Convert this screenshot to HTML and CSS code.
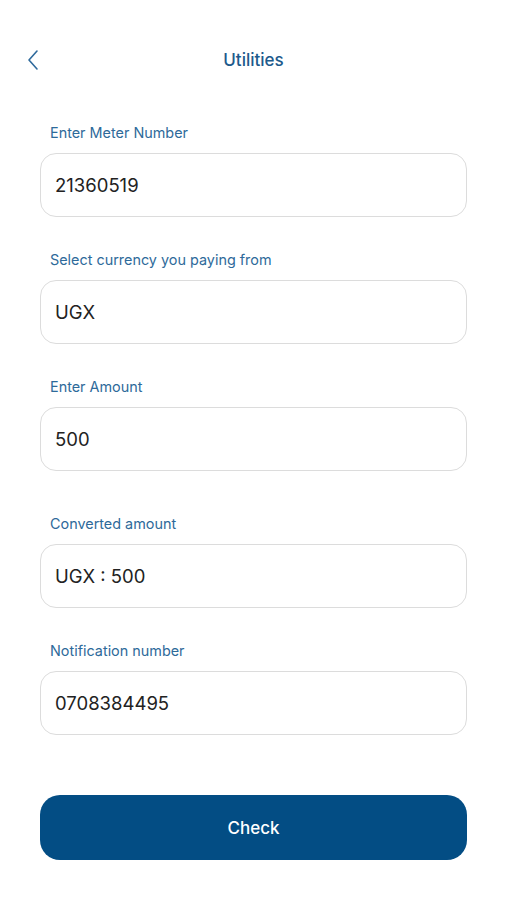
FILE: index.html
```html
<!DOCTYPE html>
<html lang="en">
<head>
    <meta charset="UTF-8">
    <meta name="viewport" content="width=device-width, initial-scale=1.0">
    <title>Utilities</title>
    <link rel="stylesheet" href="styles.css">
</head>
<body>
    <header class="topbar">
        <button class="back" aria-label="Back">
            <svg width="14" height="22" viewBox="0 0 14 22" fill="none">
                <path d="M11 2 L3 11 L11 20" stroke="#2f6a9c" stroke-width="1.6" stroke-linecap="round" stroke-linejoin="round"/>
            </svg>
        </button>
        <h1 class="title">Utilities</h1>
    </header>

    <main class="form">
        <div class="field">
            <label class="label" for="meter">Enter Meter Number</label>
            <div class="box" id="meter">21360519</div>
        </div>

        <div class="field">
            <label class="label" for="currency">Select currency you paying from</label>
            <div class="box" id="currency">UGX</div>
        </div>

        <div class="field">
            <label class="label" for="amount">Enter Amount</label>
            <div class="box" id="amount">500</div>
        </div>

        <div class="field field-wide">
            <label class="label" for="converted">Converted amount</label>
            <div class="box" id="converted">UGX : 500</div>
        </div>

        <div class="field">
            <label class="label" for="phone">Notification number</label>
            <div class="box" id="phone">0708384495</div>
        </div>

        <button class="check">Check</button>
    </main>
</body>
</html>
```

FILE: styles.css
```css
body {
    margin: 0;
    padding: 0;
    background: #fff;
    font-family: Inter, "Noto Sans", sans-serif;
    color: #222;
}

.topbar {
    position: relative;
    height: 40px;
    margin-top: 40px;
    display: flex;
    align-items: center;
    justify-content: center;
}

.back {
    position: absolute;
    left: 26px;
    top: 9px;
    background: none;
    border: 0;
    padding: 0;
    width: 14px;
    height: 22px;
}

.title {
    margin: 0;
    font-size: 17px;
    font-weight: 500;
    color: #1d5a8c;
}

.form {
    padding: 0 40px;
    margin-top: 43px;
}

.field {
    margin-top: 33px;
}

.field:first-child {
    margin-top: 0;
}

.field-wide {
    margin-top: 43px;
}

.label {
    display: block;
    padding-left: 10px;
    font-size: 14.4px;
    line-height: 20px;
    color: #2e6a9a;
    margin-bottom: 10px;
}

.box {
    box-sizing: border-box;
    height: 64px;
    border: 1.5px solid #dcdcdc;
    border-radius: 16px;
    padding: 0 14px;
    display: flex;
    align-items: center;
    font-size: 18.5px;
    color: #222;
}

.check {
    display: block;
    width: 100%;
    height: 65px;
    margin-top: 60px;
    border: 0;
    border-radius: 20px;
    background: #034d84;
    color: #fff;
    font-family: Inter, "Noto Sans", sans-serif;
    font-size: 17px;
    font-weight: 500;
}
```
